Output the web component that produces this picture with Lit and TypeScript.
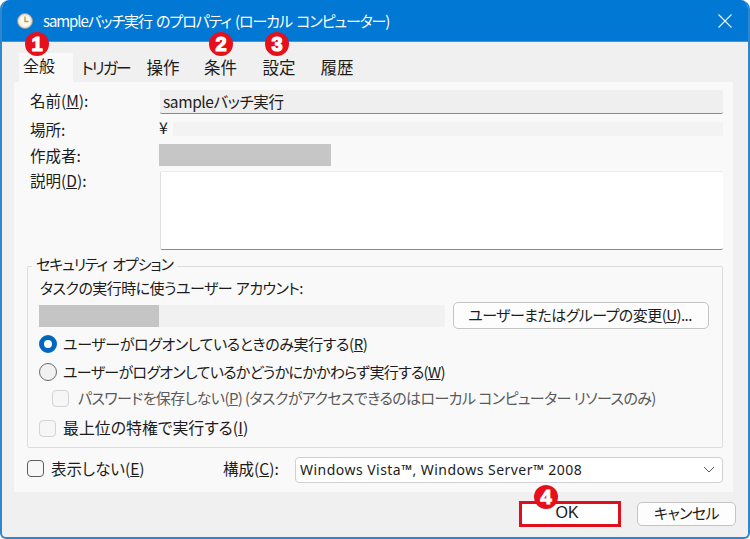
import { LitElement, html, css } from "lit";
import { customElement } from "lit/decorators.js";

@customElement("app-root")
export class AppRoot extends LitElement {
  static styles = css`
    :host { display: block; width: 750px; height: 539px; background: #fff; position: relative; overflow: hidden;
      font-family: "Noto Sans CJK JP", "Noto Sans", sans-serif; font-size: 15.5px; color: #1c1c1c; font-feature-settings: "palt"; font-weight: 400; }
    * { box-sizing: border-box; }
    .window { height: 539px; display: flex; flex-direction: column; background: #f0f0f0; border-radius: 9px 9px 6px 6px; overflow: hidden;
      border: solid #2f86cc; border-width: 0 2px 2px 2px; }
    .title { height: 42px; flex: none; margin: 0 -2px; background: #0078d4; color: #fff; display: flex; align-items: center; padding: 0 18px 0 17px; font-size: 15px; letter-spacing: -1.1px; word-spacing: 2px; border-bottom: 1px solid #2aa0e0; }
    .title svg.clock { margin-right: 10px; flex: none; }
    .title span { flex: 1; white-space: pre; }
    .tabs { height: 40px; flex: none; display: flex; padding-left: 17px; align-items: flex-end; font-size: 16.5px; }
    .tab { height: 29px; display: flex; align-items: center; justify-content: center; padding-bottom: 1px; flex: none; white-space: nowrap; }
    .tab.active { background: #f9f9f9; width: 54px; padding: 0 14px 5px 0; font-size: 16px; }
    .t2 { margin-left: 8px; width: 49px; letter-spacing: -2px; font-size: 16px; }
    .t3 { margin-left: 16px; width: 34px; }
    .t4 { margin-left: 24px; width: 33px; }
    .t5 { margin-left: 25px; width: 34px; }
    .t6 { margin-left: 24px; width: 34px; }
    .panel { flex: none; height: 410px; margin: 0 15px 0 12px; background: #f9f9f9; padding: 8px 10px 9px 13px; display: flex; flex-direction: column; }
    .form { display: grid; grid-template-columns: 133px 1fr; grid-template-rows: 24px 30px 22px 84px; flex: none; }
    .form .lab { padding-left: 3px; display: flex; align-items: center; }
    .lab.l1 { padding-bottom: 4px; }
    .name { background: #efefef; border-bottom: 1.5px solid #8a8a8a; border-radius: 2px; padding: 0 0 2px 3px; display: flex; align-items: center; letter-spacing: -0.4px; }
    .loc { display: flex; align-items: center; margin-left: -1px; }
    .loc b { font-weight: 400; width: 14px; font-size: 16px; margin-top: -4px; }
    .loc i { flex: 1; height: 14px; background: #f3f3f3; }
    .author { width: 172px; margin-left: -1px; background: #c6c6c6; }
    .desc-l { align-items: flex-start !important; padding-top: 3px; }
    .desc { background: #fff; border-left: 1px solid #dedede; border-top: 1px solid #ececec; border-bottom: 1.5px solid #8a8a8a; margin-top: 5px; height: 79px; border-radius: 2px; }
    .group { flex: none; margin-top: 16px; height: 182px; border: 1px solid #dddddd; border-radius: 2px; padding-left: 11px; display: flex; flex-direction: column; font-size: 15px; }
    .legend { width: fit-content; margin: -13px 0 1px -7px; height: 20px; line-height: 20px; padding: 0 4px; background: #f9f9f9; letter-spacing: -1.1px; word-spacing: 3px; }
    .acct { height: 20px; margin: 3px 0 0 1px; line-height: 20px; letter-spacing: -0.55px; word-spacing: 1px; }
    .picker { height: 27px; margin-top: 4px; display: flex; align-items: center; flex: none; }
    .who { width: 406px; height: 22px; background: #f1f1f1; flex: none; }
    .who i { display: block; width: 120px; height: 22px; background: #c5c5c5; }
    .btn { background: #fdfdfd; border: 1px solid #c4c4c4; border-radius: 5px; display: flex; align-items: center; justify-content: center; white-space: nowrap; }
    .change { width: 256px; height: 27px; margin-left: 8px; letter-spacing: -0.55px; padding: 0 2px 3px 0; }
    .opt { display: flex; align-items: center; white-space: nowrap; flex: none; }
    .o1 { height: 28px; margin-top: 1px; gap: 6px; letter-spacing: -0.4px; }
    .o2 { height: 28px; gap: 6px; letter-spacing: -0.7px; }
    .o3 { height: 24px; padding-left: 13px; gap: 9px; color: #5a5a5a; letter-spacing: -0.6px; }
    .o4 { height: 24px; margin-top: 6px; gap: 7px; font-size: 15.9px; }
    .opt > span:last-child { margin-top: -1px; }
    .radio { width: 18px; height: 18px; border-radius: 50%; flex: none; }
    .radio.on { background: #fff; border: 5px solid #0067c0; }
    .radio.off { background: #f1f1f1; border: 1px solid #6a6a6a; }
    .check { width: 17px; height: 17px; border-radius: 4px; border: 1px solid #d4d4d4; background: #f6f6f6; flex: none; }
    .check.dark { border-color: #5e5e5e; background: #f7f7f7; }
    .bottom { flex: none; margin-top: 9px; height: 26px; display: grid; grid-template-columns: 197px 71px 1fr; align-items: center; }
    .hide { display: flex; align-items: center; gap: 7px; padding-bottom: 4px; }
    .cfg { padding: 0 0 4px 0; margin-left: -1px; }
    .select { height: 26px; background: #fff; border: 1px solid #d0d0d0; border-radius: 4px; display: flex; align-items: center; justify-content: space-between; padding: 0 7px 2px 4px; font-size: 14px; letter-spacing: 0.47px; font-family: "Noto Sans", sans-serif; }
    .foot { flex: 1; display: flex; justify-content: flex-end; align-items: center; padding: 0 12px 2px 0; gap: 16px; }
    .ok { width: 102px; height: 26px; background: #fff; border: 3px solid #df0f1c; border-radius: 0; font-family: "Liberation Sans", sans-serif; font-size: 16px; padding: 0 6px 2px 0; }
    .cancel { width: 99px; height: 24px; font-size: 15px; letter-spacing: -0.6px; padding-bottom: 3px; }
    .badge { position: absolute; width: 24px; height: 24px; border-radius: 50%; background: #e5101c; color: #fff; font: 900 20px/24px "Liberation Sans", sans-serif; -webkit-text-stroke: 1.2px #fff; text-align: center; }
    .b1 { left: 25px; top: 32px; }
    .b2 { left: 209px; top: 32px; }
    .b3 { left: 265px; top: 32px; }
    .b4 { left: 534px; top: 485px; }
    u { text-underline-offset: 1px; }
  `;

  render() {
    return html`
      <div class="window">
        <div class="title">
          <svg class="clock" width="16" height="16" viewBox="0 0 16 16">
            <circle cx="8" cy="8" r="7.5" fill="#e9e4dc" stroke="#8d99a3" />
            <circle cx="8" cy="8" r="5.5" fill="#fbf8ee" />
            <path d="M8 3.5V8.5H11.5" fill="none" stroke="#c79a3c" stroke-width="1.4" />
          </svg>
          <span>sampleバッチ実行 のプロパティ (ローカル コンピューター)</span>
          <svg width="14" height="14" viewBox="0 0 14 14"><path d="M0.5 0.5L13.5 13.5M13.5 0.5L0.5 13.5" stroke="#eaf6ff" stroke-width="1.1" /></svg>
        </div>
        <div class="tabs">
          <div class="tab active">全般</div>
          <div class="tab t2">トリガー</div>
          <div class="tab t3">操作</div>
          <div class="tab t4">条件</div>
          <div class="tab t5">設定</div>
          <div class="tab t6">履歴</div>
        </div>
        <div class="panel">
          <div class="form">
            <div class="lab l1"><span>名前(<u>M</u>):</span></div>
            <div class="name">sampleバッチ実行</div>
            <div class="lab">場所:</div>
            <div class="loc"><b>¥</b><i></i></div>
            <div class="lab">作成者:</div>
            <div class="author"></div>
            <div class="lab desc-l"><span>説明(<u>D</u>):</span></div>
            <div class="desc"></div>
          </div>
          <div class="group">
            <div class="legend">セキュリティ オプション</div>
            <div class="acct">タスクの実行時に使うユーザー アカウント:</div>
            <div class="picker">
              <div class="who"><i></i></div>
              <div class="btn change"><span>ユーザーまたはグループの変更(<u>U</u>)...</span></div>
            </div>
            <div class="opt o1"><span class="radio on"></span><span>ユーザーがログオンしているときのみ実行する(<u>R</u>)</span></div>
            <div class="opt o2"><span class="radio off"></span><span>ユーザーがログオンしているかどうかにかかわらず実行する(<u>W</u>)</span></div>
            <div class="opt o3"><span class="check"></span><span>パスワードを保存しない(<u>P</u>) (タスクがアクセスできるのはローカル コンピューター リソースのみ)</span></div>
            <div class="opt o4"><span class="check"></span><span>最上位の特権で実行する(<u>I</u>)</span></div>
          </div>
          <div class="bottom">
            <div class="hide"><span class="check dark"></span><span>表示しない(<u>E</u>)</span></div>
            <div class="cfg"><span>構成(<u>C</u>):</span></div>
            <div class="select">
              <span>Windows Vista™, Windows Server™ 2008</span>
              <svg width="12" height="7" viewBox="0 0 12 7"><path d="M1 1L6 6L11 1" fill="none" stroke="#555" stroke-width="1" /></svg>
            </div>
          </div>
        </div>
        <div class="foot">
          <div class="btn ok">OK</div>
          <div class="btn cancel">キャンセル</div>
        </div>
      </div>
      <div class="badge b1">1</div>
      <div class="badge b2">2</div>
      <div class="badge b3">3</div>
      <div class="badge b4">4</div>
    `;
  }
}
